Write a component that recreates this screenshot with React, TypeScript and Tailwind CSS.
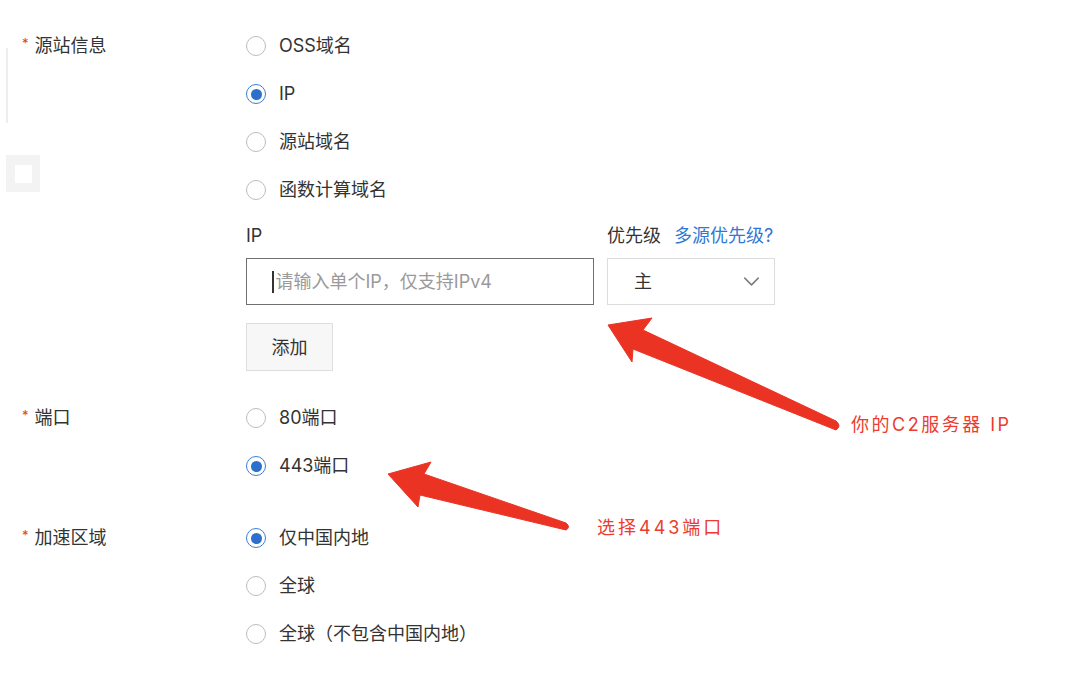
import { ChevronDown } from "lucide-react"

const font = { fontFamily: 'Inter, "Noto Sans CJK SC", sans-serif' }

function Radio({ label, checked }: { label: string; checked?: boolean }) {
  return (
    <div className="flex h-[48px] items-center">
      {checked ? (
        <span className="flex h-[20px] w-[20px] items-center justify-center rounded-full border-[1.5px] border-[#3b7fd6]">
          <span className="h-[11px] w-[11px] rounded-full bg-[#2c6fcd]" />
        </span>
      ) : (
        <span className="h-[20px] w-[20px] rounded-full border border-[#bdbdbd] bg-white" />
      )}
      <span className="ml-[13px] text-[18px] leading-[24px] text-[#333]">{label}</span>
    </div>
  )
}

function FormRow({ label, children, className = "" }: { label: string; children: React.ReactNode; className?: string }) {
  return (
    <div className={`flex ${className}`}>
      <div className="flex h-[48px] w-[246px] shrink-0 items-center pl-[22px]">
        <span className="mr-[6px] mt-[-4px] text-[13px] text-[#e23b2e]">*</span>
        <span className="text-[18px] leading-[24px] text-[#333]">{label}</span>
      </div>
      <div className="flex flex-col">{children}</div>
    </div>
  )
}

export default function App() {
  return (
    <div className="relative h-[679px] w-[1080px] overflow-hidden bg-white" style={font}>
      {/* leftover page edges */}
      <div className="absolute left-[6px] top-[48px] h-[75px] w-[2px] bg-[#eeeeee]" />
      <div className="absolute left-[6px] top-[155px] flex h-[37px] w-[34px] items-center justify-center bg-[#f3f3f3]">
        <div className="h-[18px] w-[17px] bg-white" />
      </div>

      <div className="flex flex-col pt-[22px]">
        <FormRow label="源站信息">
          <Radio label="OSS域名" />
          <Radio label="IP" checked />
          <Radio label="源站域名" />
          <Radio label="函数计算域名" />
          <div className="mt-[10px] flex gap-[13px]">
            <div className="flex flex-col">
              <span className="h-[24px] text-[18px] leading-[24px] text-[#333]">IP</span>
              <div className="mt-[10px] flex h-[47px] w-[348px] items-center border-[1.5px] border-[#707070] pl-[25px]">
                <span className="mr-[2px] h-[22px] w-[1.5px] bg-[#333]" />
                <span className="text-[18px] text-[#9a9a9a]">请输入单个IP，仅支持IPv4</span>
              </div>
            </div>
            <div className="flex flex-col">
              <div className="flex h-[24px] items-center gap-[13px] text-[18px] leading-[24px]">
                <span className="text-[#333]">优先级</span>
                <span className="text-[#2f78d4]">多源优先级?</span>
              </div>
              <div className="mt-[10px] flex h-[47px] w-[168px] items-center justify-between border border-[#dcdcdc] pl-[26px] pr-[9px]">
                <span className="text-[18px] text-[#333]">主</span>
                <ChevronDown className="h-[27px] w-[27px] text-[#7a7a7a]" strokeWidth={1.3} />
              </div>
            </div>
          </div>
          <div className="mt-[18px] flex h-[48px] w-[87px] items-center justify-center border border-[#dedede] bg-[#f7f7f7] text-[18px] text-[#333]">
            添加
          </div>
        </FormRow>

        <FormRow label="端口" className="mt-[23px]">
          <Radio label="80端口" />
          <Radio label="443端口" checked />
        </FormRow>

        <FormRow label="加速区域" className="mt-[24px]">
          <Radio label="仅中国内地" checked />
          <Radio label="全球" />
          <Radio label="全球（不包含中国内地）" />
        </FormRow>
      </div>

      {/* annotations */}
      <svg className="absolute left-0 top-0" width="1080" height="679" viewBox="0 0 1080 679">
        <path
          d="M608 325 L652 318 L643 330 L836 421 Q842 426 836 430 L633 349 L632 362 Z"
          fill="#eb3324"
          stroke="#eb3324"
          strokeWidth="1"
          strokeLinejoin="round"
        />
        <path
          d="M388 474 L431 462 L424 474 L566 523 Q571 527 566 530 L420 495 L418 507 Z"
          fill="#eb3324"
          stroke="#eb3324"
          strokeWidth="1"
          strokeLinejoin="round"
        />
      </svg>
      <span className="absolute left-[851px] top-[412px] text-[18px] leading-[26px] tracking-[2.5px] text-[#ec3b2f]">
        你的C2服务器 IP
      </span>
      <span className="absolute left-[597px] top-[515px] text-[18px] leading-[26px] tracking-[3px] text-[#ec3b2f]">
        选择443端口
      </span>
    </div>
  )
}
